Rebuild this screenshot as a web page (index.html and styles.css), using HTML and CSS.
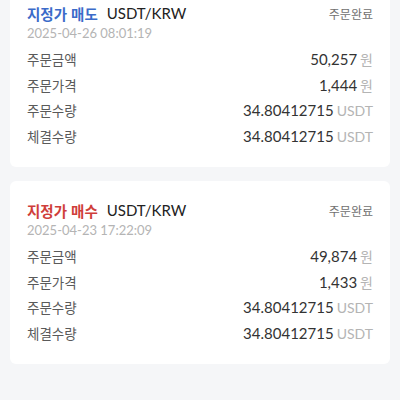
FILE: index.html
```html
<!DOCTYPE html>
<html lang="ko">
<head>
    <meta charset="UTF-8">
    <meta name="viewport" content="width=device-width, initial-scale=1.0">
    <title>주문내역</title>
    <link rel="stylesheet" href="styles.css">
</head>
<body>
    <div class="order-list">
        <div class="order-card">
            <div class="order-head">
                <div class="order-title">
                    <span class="order-type sell">지정가 매도</span>
                    <span class="market">USDT/KRW</span>
                </div>
                <span class="status">주문완료</span>
            </div>
            <div class="order-date">2025-04-26 08:01:19</div>
            <div class="order-rows">
                <div class="row"><span class="label">주문금액</span><span class="value">50,257<span class="unit">원</span></span></div>
                <div class="row"><span class="label">주문가격</span><span class="value">1,444<span class="unit">원</span></span></div>
                <div class="row"><span class="label">주문수량</span><span class="value">34.80412715<span class="unit">USDT</span></span></div>
                <div class="row"><span class="label">체결수량</span><span class="value">34.80412715<span class="unit">USDT</span></span></div>
            </div>
        </div>

        <div class="order-card">
            <div class="order-head">
                <div class="order-title">
                    <span class="order-type buy">지정가 매수</span>
                    <span class="market">USDT/KRW</span>
                </div>
                <span class="status">주문완료</span>
            </div>
            <div class="order-date">2025-04-23 17:22:09</div>
            <div class="order-rows">
                <div class="row"><span class="label">주문금액</span><span class="value">49,874<span class="unit">원</span></span></div>
                <div class="row"><span class="label">주문가격</span><span class="value">1,433<span class="unit">원</span></span></div>
                <div class="row"><span class="label">주문수량</span><span class="value">34.80412715<span class="unit">USDT</span></span></div>
                <div class="row"><span class="label">체결수량</span><span class="value">34.80412715<span class="unit">USDT</span></span></div>
            </div>
        </div>
    </div>
</body>
</html>
```

FILE: styles.css
```css
body {
    margin: 0;
    background-color: #f5f6f8;
    font-family: Lato, "Noto Sans CJK KR", sans-serif;
    color: #333333;
}
.order-list {
    display: flex;
    flex-direction: column;
    gap: 14px;
    padding: 0 10px;
    margin-top: -16px; /* list is scrolled a little */
}
.order-card {
    background-color: #ffffff;
    border-radius: 6px;
    padding: 18px 17px 18px 17px;
}
.order-head {
    display: flex;
    justify-content: space-between;
    align-items: center;
    height: 22px;
}
.order-title {
    display: flex;
    align-items: center;
    gap: 9px;
}
.order-type {
    font-family: "Noto Sans CJK KR", sans-serif;
    font-weight: bold;
    font-size: 14.5px;
}
.order-type.sell {
    color: #3b6bc9;
}
.order-type.buy {
    color: #cf3e3a;
}
.market {
    font-size: 15px;
    color: #222222;
}
.status {
    font-family: "Noto Sans CJK KR", sans-serif;
    font-size: 12px;
    color: #707070;
}
.order-date {
    font-size: 13px;
    line-height: 18px;
    color: #b4b4b4;
}
.order-rows {
    margin-top: 5px;
}
.row {
    display: flex;
    justify-content: space-between;
    align-items: baseline;
    height: 25.5px;
    line-height: 25.5px;
}
.label {
    font-family: "Noto Sans CJK KR", sans-serif;
    font-size: 13.5px;
    color: #5a5a5a;
}
.value {
    font-size: 15px;
    color: #333333;
}
.unit {
    font-size: 14px;
    color: #b4b4b4;
    margin-left: 3px;
}
```
